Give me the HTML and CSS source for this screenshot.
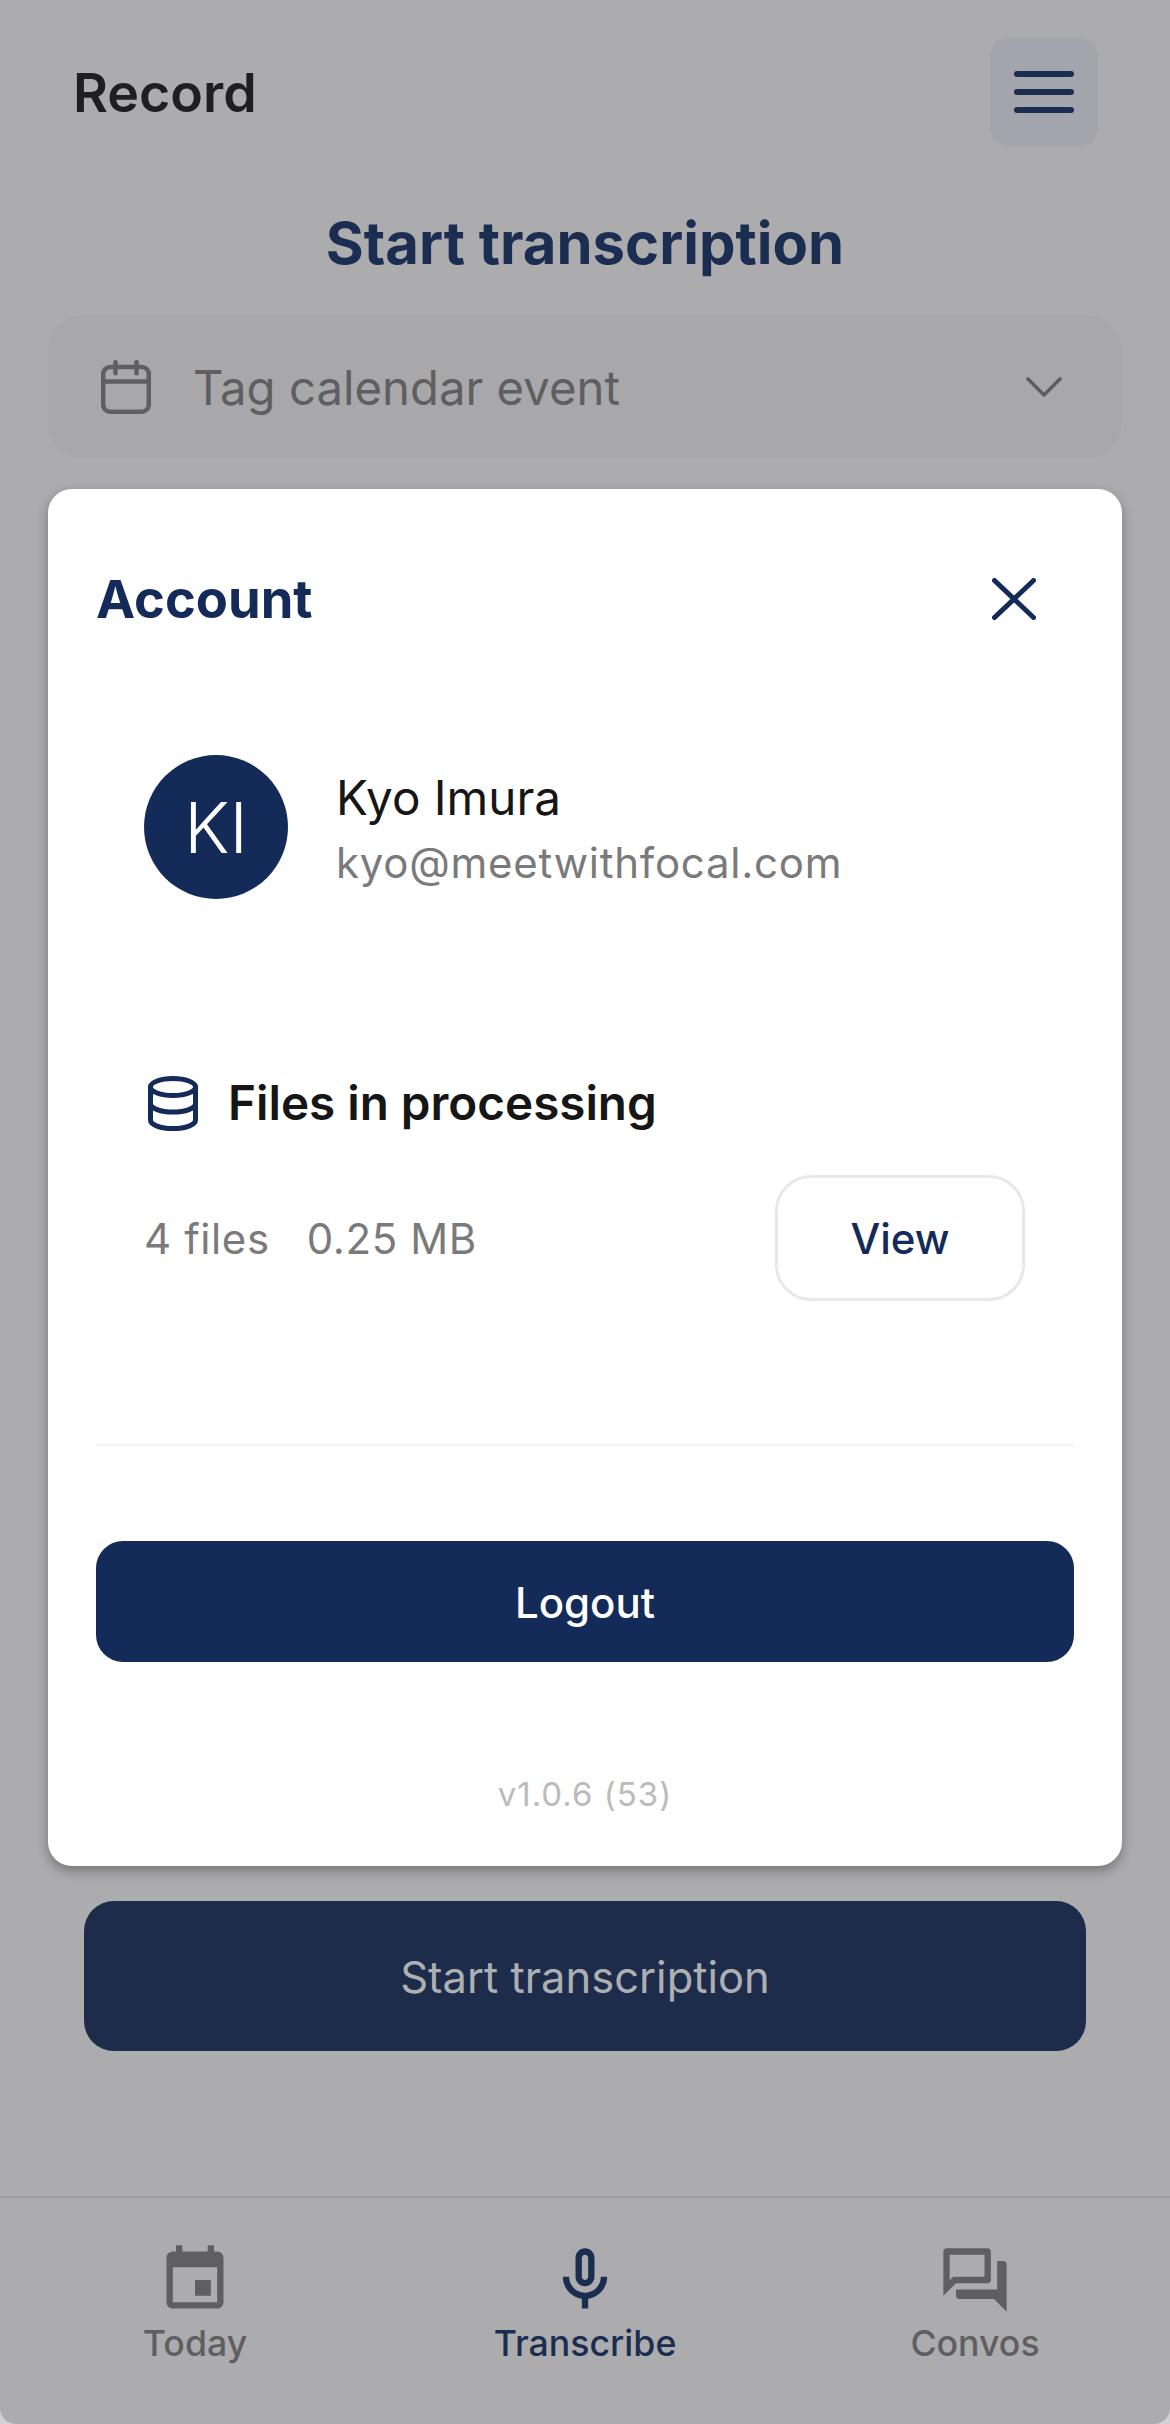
FILE: index.html
```html
<!DOCTYPE html>
<html lang="en">
<head>
    <meta charset="UTF-8">
    <meta name="viewport" content="width=device-width, initial-scale=1.0">
    <title>Record</title>
    <link rel="stylesheet" href="styles.css">
</head>
<body>
    <div class="page">
        <div class="header">
            <div class="page-name">Record</div>
            <div class="menu-button">
                <span></span>
                <span></span>
                <span></span>
            </div>
        </div>

        <h1 class="title">Start transcription</h1>

        <div class="calendar-select">
            <svg class="calendar-icon" viewBox="0 0 50 54" fill="none" stroke="#5f5f62" stroke-width="4.5" stroke-linecap="round">
                <rect x="2.2" y="7" width="45.6" height="44.8" rx="7"></rect>
                <path d="M2.2 21.500h45.600"></path>
                <path d="M14.500 2.200v11"></path>
                <path d="M35.500 2.200v11"></path>
            </svg>
            <span class="calendar-label">Tag calendar event</span>
            <svg class="chevron" viewBox="0 0 36 20" fill="none" stroke="#5f5f62" stroke-width="3.600" stroke-linecap="round" stroke-linejoin="round">
                <path d="M2 2l16 16L34 2"></path>
            </svg>
        </div>

        <button class="start-button">Start transcription</button>

        <div class="tabbar">
            <div class="tab">
                <svg viewBox="0 0 24 24" fill="#5f5f62"><path d="M17 12h-5v5h5v-5zM16 1v2H8V1H6v2H5c-1.110 0-1.990.9-1.990 2L3 19c0 1.100.89 2 2 2h14c1.100 0 2-.9 2-2V5c0-1.100-.9-2-2-2h-1V1h-2zm3 18H5V8h14v11z"></path></svg>
                <span>Today</span>
            </div>
            <div class="tab active">
                <svg viewBox="0 0 24 24" fill="#1c2d52"><path d="M12 14c1.660 0 3-1.340 3-3V5c0-1.660-1.340-3-3-3S9 3.340 9 5v6c0 1.660 1.340 3 3 3zm-1-9c0-.55.45-1 1-1s1 .45 1 1v6c0 .55-.45 1-1 1s-1-.45-1-1V5zm6 6c0 2.760-2.240 5-5 5s-5-2.240-5-5H5c0 3.530 2.610 6.430 6 6.920V21h2v-3.080c3.390-.49 6-3.390 6-6.920h-2z"></path></svg>
                <span>Transcribe</span>
            </div>
            <div class="tab">
                <svg viewBox="0 0 24 24" fill="#5f5f62"><path d="M15 4v7H5.170L4 12.170V4h11m1-2H3c-.55 0-1 .45-1 1v14l4-4h10c.55 0 1-.45 1-1V3c0-.55-.45-1-1-1zm5 4h-2v9H6v2c0 .55.45 1 1 1h11l4 4V7c0-.55-.45-1-1-1z"></path></svg>
                <span>Convos</span>
            </div>
        </div>

        <div class="modal">
            <div class="modal-header">
                <h2>Account</h2>
                <svg class="close-icon" viewBox="0 0 44 42" fill="none" stroke="#142b5a" stroke-width="5" stroke-linecap="round">
                    <path d="M2.500 2.500l39 37"></path>
                    <path d="M41.500 2.500l-39 37"></path>
                </svg>
            </div>

            <div class="user-row">
                <div class="avatar">KI</div>
                <div class="user-info">
                    <div class="user-name">Kyo Imura</div>
                    <div class="user-email">kyo@meetwithfocal.com</div>
                </div>
            </div>

            <div class="files-title">
                <svg class="files-icon" viewBox="0 0 50 55" fill="none" stroke="#142b5a" stroke-width="5" stroke-linecap="round">
                    <ellipse cx="25" cy="11" rx="22.500" ry="8.500"></ellipse>
                    <path d="M2.500 11v33c0 4.800 10 8.500 22.500 8.500s22.500-3.700 22.500-8.500V11"></path>
                    <path d="M2.500 27.500c0 4.800 10 8.500 22.500 8.500s22.500-3.700 22.500-8.500"></path>
                </svg>
                <span>Files in processing</span>
            </div>

            <div class="files-row">
                <div class="files-meta">
                    <span>4 files</span>
                    <span>0.25 MB</span>
                </div>
                <button class="view-button">View</button>
            </div>

            <div class="divider"></div>

            <button class="logout-button">Logout</button>

            <div class="version">v1.0.6 (53)</div>
        </div>
    </div>
</body>
</html>
```

FILE: styles.css
```css
* {
    box-sizing: border-box;
}
body {
    margin: 0;
    font-family: 'Inter', sans-serif;
    background-color: #d2d2d4;
}
h1, h2 {
    margin: 0;
}
button {
    display: block;
    padding: 0;
    font-family: inherit;
    cursor: pointer;
}
.page {
    position: relative;
    display: flex;
    flex-direction: column;
    height: 2424px;
    overflow: hidden;
    background-color: #acacae;
    border-radius: 0 0 16px 16px;
}
.header {
    display: flex;
    align-items: center;
    justify-content: space-between;
    padding: 38px 72px 0 73px;
}
.page-name {
    font-size: 53.700px;
    font-weight: 600;
    color: #1f1f21;
}
.menu-button {
    display: flex;
    flex-direction: column;
    align-items: center;
    justify-content: center;
    gap: 12px;
    width: 108px;
    height: 108px;
    background-color: #a4a5ac;
    border-radius: 18px;
}
.menu-button span {
    width: 60px;
    height: 6px;
    background-color: #1c2d52;
    border-radius: 3px;
}
.title {
    margin-top: 62px;
    font-size: 58px;
    font-weight: 700;
    line-height: 70px;
    text-align: center;
    color: #1c2d52;
}
.calendar-select {
    display: flex;
    align-items: center;
    height: 144px;
    margin: 37px 48px 0;
    padding: 0 60px 0 53px;
    background-color: #a8a8aa;
    border-radius: 36px;
}
.calendar-icon {
    width: 50px;
    height: 54px;
}
.calendar-label {
    flex: 1;
    margin-left: 42px;
    font-size: 47.300px;
    color: #5f5f62;
}
.chevron {
    width: 36px;
    height: 20px;
}
.start-button {
    height: 150px;
    margin: auto 84px 145px;
    padding-top: 2px;
    font-size: 43.500px;
    color: #aeafb3;
    background-color: #1e2c4c;
    border: none;
    border-radius: 30px;
}
.tabbar {
    display: flex;
    height: 228px;
    padding-top: 44px;
    border-top: 2px solid #9e9ea2;
}
.tab {
    flex: 1;
    display: flex;
    flex-direction: column;
    align-items: center;
    font-size: 35.700px;
    font-weight: 500;
    color: #5f5f62;
}
.tab svg {
    width: 76px;
    height: 76px;
}
.tab span {
    margin-top: 3px;
}
.tab.active {
    color: #1c2d52;
}
.modal {
    position: absolute;
    top: 489px;
    left: 48px;
    width: 1074px;
    height: 1377px;
    padding: 80px 48px 0;
    background: white;
    border-radius: 24px;
    box-shadow: 0 5px 12px rgba(0, 0, 0, 0.32);
}
.modal-header {
    display: flex;
    align-items: center;
    justify-content: space-between;
    height: 60px;
    padding-right: 38px;
}
.modal-header h2 {
    font-size: 52.500px;
    font-weight: 700;
    color: #142b5a;
}
.close-icon {
    width: 44px;
    height: 42px;
}
.user-row {
    display: flex;
    align-items: center;
    gap: 48px;
    margin-top: 126px;
    padding-left: 48px;
}
.avatar {
    display: flex;
    align-items: center;
    justify-content: center;
    width: 144px;
    height: 144px;
    font-size: 70px;
    font-weight: 300;
    color: white;
    background-color: #142b5a;
    border-radius: 50%;
}
.user-info {
    padding-top: 4px;
}
.user-name {
    font-size: 47.600px;
    line-height: 56px;
    color: #161616;
}
.user-email {
    margin-top: 11px;
    font-size: 42px;
    line-height: 52px;
    letter-spacing: 0.75px;
    color: #7a7a7a;
}
.files-title {
    display: flex;
    align-items: center;
    gap: 30px;
    margin-top: 174px;
    padding-left: 52px;
    font-size: 47.600px;
    font-weight: 600;
    line-height: 60px;
    color: #161616;
}
.files-icon {
    width: 50px;
    height: 55px;
}
.files-row {
    display: flex;
    align-items: center;
    justify-content: space-between;
    margin-top: 42px;
    padding: 0 49px 0 48px;
}
.files-meta {
    display: flex;
    gap: 37px;
    font-size: 42px;
    letter-spacing: 0.6px;
    color: #7a7a7a;
}
.view-button {
    width: 250px;
    height: 126px;
    font-size: 42px;
    font-weight: 500;
    color: #142b5a;
    background: white;
    border: 3px solid #e8e8e8;
    border-radius: 36px;
}
.divider {
    height: 2px;
    margin-top: 143px;
    background-color: #f4f4f5;
}
.logout-button {
    width: 100%;
    height: 121px;
    margin-top: 95px;
    padding-top: 2px;
    font-size: 42px;
    font-weight: 500;
    color: white;
    background-color: #142b5a;
    border: none;
    border-radius: 27px;
}
.version {
    margin-top: 112px;
    font-size: 33px;
    line-height: 40px;
    letter-spacing: 1px;
    text-align: center;
    color: #bbbbbb;
}
```
